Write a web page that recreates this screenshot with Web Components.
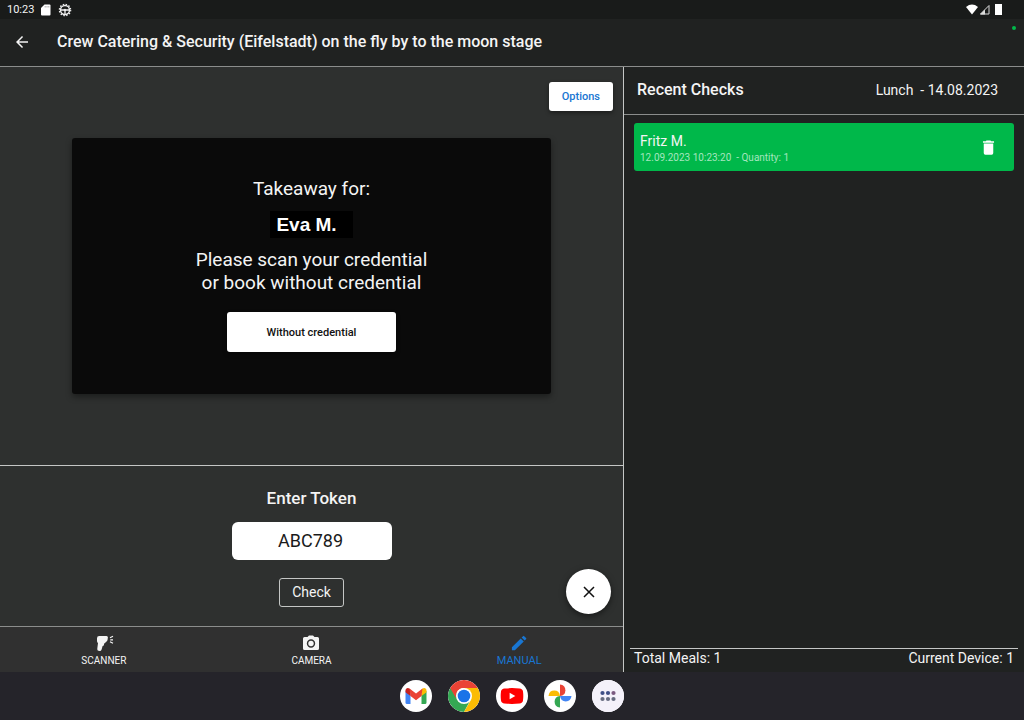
<!DOCTYPE html>
<html lang="en">
<head>
<meta charset="utf-8">
<meta name="viewport" content="width=device-width, initial-scale=1">
<title>Recent Checks</title>
<style>
  body {
    margin: 0;
    font-family: Roboto, "Liberation Sans", sans-serif;
    color: #f4f4f4;
    background: #202221;
    --line: #8b8d8c;
    --line-strong: #c4c6c5;
    --accent: #1976d2;
    --success: #00b84a;
  }
</style>
</head>
<body>
<catering-app>
  <status-bar slot="status" time="10:23"></status-bar>
  <top-bar slot="header">Crew Catering &amp; Security (Eifelstadt) on the fly by to the moon stage</top-bar>

  <takeaway-stage slot="main">
    <span slot="name">Eva M.</span>
  </takeaway-stage>
  <token-entry slot="main" value="ABC789"></token-entry>
  <mode-nav slot="main">
    <mode-tab icon="scanner">SCANNER</mode-tab>
    <mode-tab icon="camera">CAMERA</mode-tab>
    <mode-tab icon="pencil" active>MANUAL</mode-tab>
  </mode-nav>

  <checks-panel slot="side">
    <span slot="meal">Lunch&nbsp; - 14.08.2023</span>
    <check-item time="12.09.2023 10:23:20" quantity="1">Fritz M.</check-item>
    <span slot="total">Total Meals: 1</span>
    <span slot="device">Current Device: 1</span>
  </checks-panel>

  <app-dock slot="dock"></app-dock>
</catering-app>

<script>
  // attaches an open shadow root and fills it from a template
  class BaseElement extends HTMLElement {
    constructor() {
      super();
      this.attachShadow({ mode: "open" });
    }

    connectedCallback() {
      const template = document.createElement("template");
      template.innerHTML = this.render();
      this.shadowRoot.replaceChildren(template.content);
      this.bind();
    }

    bind() {}
  }

  class CateringApp extends BaseElement {
    render() {
      return `
        <style>
          :host {
            display: flex;
            flex-direction: column;
            min-height: 100vh;
          }
          .content {
            flex: 1;
            display: grid;
            grid-template-columns: 39fr 25fr;
          }
          main {
            display: flex;
            flex-direction: column;
            min-width: 0;
            box-sizing: border-box;
            background: #2e302f;
            border-right: 1px solid var(--line-strong);
          }
          aside {
            display: flex;
            min-width: 0;
          }
        </style>
        <slot name="status"></slot>
        <slot name="header"></slot>
        <div class="content">
          <main><slot name="main"></slot></main>
          <aside><slot name="side"></slot></aside>
        </div>
        <slot name="dock"></slot>
      `;
    }
  }
  customElements.define("catering-app", CateringApp);

  class StatusBar extends BaseElement {
    render() {
      return `
        <style>
          :host {
            display: flex;
            align-items: center;
            gap: 6px;
            height: 19px;
            padding: 0 22px 0 7px;
            background: #191b1a;
            font-size: 11px;
            line-height: 19px;
          }
          svg { display: block; }
          .right {
            display: flex;
            align-items: center;
            gap: 1px;
            margin-left: auto;
          }
          .battery { margin-left: 4px; }
        </style>
        <span>${this.getAttribute("time")}</span>
        <svg width="12" height="12" viewBox="0 0 12 12"><path fill="#fff" d="M4.500.5H9.500a1 1 0 0 1 1 1v9a1 1 0 0 1-1 1H2a1 1 0 0 1-1-1V4z"/><path stroke="#888" d="M5.200 2v1.500M7 2v1.500M8.800 2v1.500" stroke-width=".7"/></svg>
        <svg width="14" height="14" viewBox="0 0 14 14" fill="none" stroke="#eee">
          <circle cx="7" cy="7" r="4.500" stroke-width="1.400"/>
          <circle cx="7" cy="7" r="5.700" stroke-width="1.200" stroke-dasharray="1.500 1.480"/>
          <path d="M2.500 7h9M7 7v4.500" stroke-width="1.300"/><circle cx="7" cy="7" r=".8" fill="#eee"/>
        </svg>
        <div class="right">
          <svg width="12" height="11" viewBox="0 0 12 11"><path fill="#fff" d="M0 3Q6-1.800 12 3L6 10.500z"/></svg>
          <svg width="11" height="11" viewBox="0 0 11 11"><path fill="none" stroke="#ddd" d="M1.500 10H10V1.500z"/><path fill="#ddd" d="M1 10.500 6 5.500v5z"/></svg>
          <svg class="battery" width="7" height="11" viewBox="0 0 7 11"><path fill="#fff" d="M0 0h7v11H0z"/></svg>
        </div>
      `;
    }
  }
  customElements.define("status-bar", StatusBar);

  class TopBar extends BaseElement {
    render() {
      return `
        <style>
          :host {
            display: flex;
            align-items: center;
            gap: 20px;
            height: 45px;
            padding: 0 8px 2px 7px;
            background: #202221;
            border-bottom: 1px solid var(--line);
          }
          button {
            display: grid;
            place-items: center;
            width: 30px;
            height: 30px;
            padding: 0;
            border: 0;
            background: none;
            cursor: pointer;
          }
          h1 {
            flex: 1;
            margin: 0;
            font-size: 16px;
            font-weight: 500;
            line-height: 20px;
          }
          .dot {
            align-self: flex-start;
            width: 4px;
            height: 4px;
            margin-top: 7px;
            border-radius: 50%;
            background: var(--success);
          }
        </style>
        <button type="button" aria-label="Back">
          <svg width="18" height="18" viewBox="0 0 24 24"><path fill="#f4f4f4" d="M20 11H7.830l5.590-5.590L12 4l-8 8 8 8 1.410-1.410L7.830 13H20z"/></svg>
        </button>
        <h1><slot></slot></h1>
        <span class="dot"></span>
      `;
    }
  }
  customElements.define("top-bar", TopBar);

  class TakeawayStage extends BaseElement {
    render() {
      return `
        <style>
          :host {
            position: relative;
            flex: 1;
            display: flex;
            align-items: center;
            justify-content: center;
          }
          button {
            border: 0;
            border-radius: 3px;
            background: #fff;
            font-family: inherit;
            font-size: 11px;
            font-weight: 500;
            line-height: 13px;
            cursor: pointer;
            box-shadow: 0 2px 4px rgba(0, 0, 0, 0.4);
          }
          .options {
            position: absolute;
            top: 15px;
            right: 10px;
            padding: 8px 13px;
            color: var(--accent);
          }
          .card {
            display: flex;
            flex-direction: column;
            align-items: center;
            box-sizing: border-box;
            width: 77%;
            padding: 39px 16px 42px;
            border-radius: 3px;
            background: #0a0a0a;
            text-align: center;
            font-size: 19px;
            line-height: 23px;
            box-shadow: 0 3px 6px rgba(0, 0, 0, 0.4);
          }
          p { margin: 0; }
          .name {
            margin: 11px 0 10px;
            padding: 2px 16px 2px 6px;
            background: #000;
            color: #fff;
            font-family: "Liberation Sans", Arial, sans-serif;
            font-weight: 700;
          }
          .card button {
            margin-top: 18px;
            padding: 14px 40px 13px;
            color: #111;
          }
        </style>
        <section class="card">
          <p>Takeaway for:</p>
          <p class="name"><slot name="name"></slot></p>
          <p>Please scan your credential<br>or book without credential</p>
          <button type="button">Without credential</button>
        </section>
        <button type="button" class="options">Options</button>
      `;
    }
  }
  customElements.define("takeaway-stage", TakeawayStage);

  class TokenEntry extends BaseElement {
    render() {
      return `
        <style>
          :host {
            position: relative;
            display: block;
            border-top: 1px solid var(--line-strong);
          }
          form {
            display: flex;
            flex-direction: column;
            align-items: center;
            padding: 22px 16px 19px;
          }
          label {
            font-size: 17px;
            font-weight: 500;
            line-height: 20px;
          }
          input {
            box-sizing: border-box;
            width: 160px;
            height: 38px;
            margin: 14px 0 18px;
            padding: 0 6px 2px 4px;
            border: 0;
            border-radius: 6px;
            background: #fff;
            color: #1a1a1a;
            font-family: inherit;
            font-size: 18px;
            text-align: center;
          }
          .check {
            padding: 5px 12px;
            border: 1px solid var(--line-strong);
            border-radius: 3px;
            background: none;
            color: #f4f4f4;
            font-family: inherit;
            font-size: 14px;
            line-height: 17px;
            cursor: pointer;
          }
          .clear {
            position: absolute;
            right: 12px;
            bottom: 12px;
            display: grid;
            place-items: center;
            width: 45px;
            height: 45px;
            padding: 0;
            border: 0;
            border-radius: 50%;
            background: #fff;
            cursor: pointer;
            box-shadow: 0 2px 6px rgba(0, 0, 0, 0.5);
          }
        </style>
        <form>
          <label for="token">Enter Token</label>
          <input id="token" type="text" autocomplete="off" spellcheck="false" value="${this.getAttribute("value")}">
          <button class="check" type="submit">Check</button>
        </form>
        <button class="clear" type="button" aria-label="Clear">
          <svg width="12" height="12" viewBox="0 0 12 12"><path d="M1 1l10 10M11 1 1 11" stroke="#111" stroke-width="1.500"/></svg>
        </button>
      `;
    }

    bind() {
      const input = this.shadowRoot.querySelector("#token");
      this.shadowRoot.querySelector("form").addEventListener("submit", (e) => e.preventDefault());
      this.shadowRoot.querySelector(".clear").addEventListener("click", () => {
        input.value = "";
      });
    }
  }
  customElements.define("token-entry", TokenEntry);

  class ModeNav extends BaseElement {
    render() {
      return `
        <style>
          :host {
            display: block;
            background: #303030;
            border-top: 1px solid var(--line);
          }
          nav {
            display: grid;
            grid-template-columns: repeat(3, 1fr);
          }
        </style>
        <nav><slot></slot></nav>
      `;
    }

    bind() {
      this.addEventListener("click", (e) => {
        const tab = e.target.closest("mode-tab");
        if (!tab) return;
        this.querySelectorAll("mode-tab").forEach((t) => t.toggleAttribute("active", t === tab));
      });
    }
  }
  customElements.define("mode-nav", ModeNav);

  const tabIcons = {
    scanner: `<path d="M4 4.200Q4 2 6.200 2H13.500Q15 2 14.900 3.500L14.500 6Q14.200 7.500 12.800 8L12 9.200H11.200L10.800 11.500 9.600 12 8.600 15.500Q8.200 17 6.700 17 4 17 4.300 14.500L5 9Q4 8.500 4 7z"/><path d="M17 3.800l3-1.500M17.300 5.800H20M17 7.800l3 1.500" fill="none" stroke="currentColor" stroke-width="1.200"/>`,
    camera: `<path fill-rule="evenodd" d="M4.500 3h3L9 1.500h4L14.500 3h3A1.500 1.500 0 0 1 19 4.500v10a1.500 1.500 0 0 1-1.500 1.500h-13A1.500 1.500 0 0 1 3 14.500v-10A1.500 1.500 0 0 1 4.500 3zM11 5.300a4.200 4.200 0 1 0 0 8.400 4.200 4.200 0 0 0 0-8.400z"/><circle cx="11" cy="9.500" r="2.700"/>`,
    pencil: `<path transform="translate(1.500 -.5) scale(.8)" d="M3 17.250V21h3.750L17.810 9.940l-3.750-3.750zM20.710 7.040a1 1 0 0 0 0-1.410l-2.340-2.340a1 1 0 0 0-1.410 0l-1.830 1.830 3.750 3.750z"/>`
  };

  class ModeTab extends BaseElement {
    render() {
      return `
        <style>
          :host { display: block; color: #f4f4f4; }
          :host([active]) { color: var(--accent); }
          button {
            display: flex;
            flex-direction: column;
            align-items: center;
            gap: 3px;
            width: 100%;
            padding: 7px 0 5px;
            border: 0;
            background: none;
            color: inherit;
            font-family: inherit;
            font-size: 10px;
            line-height: 12px;
            cursor: pointer;
          }
          :host([active]) button { font-size: 11px; }
          svg { display: block; fill: currentColor; }
        </style>
        <button type="button">
          <svg width="22" height="18" viewBox="0 0 22 18">${tabIcons[this.getAttribute("icon")]}</svg>
          <slot></slot>
        </button>
      `;
    }
  }
  customElements.define("mode-tab", ModeTab);

  class ChecksPanel extends BaseElement {
    render() {
      return `
        <style>
          :host {
            flex: 1;
            display: flex;
            flex-direction: column;
            background: #202221;
          }
          header {
            display: flex;
            align-items: center;
            justify-content: space-between;
            height: 46px;
            padding: 0 26px 1px 13px;
            border-bottom: 1px solid var(--line);
            font-size: 14px;
            line-height: 18px;
          }
          h2 {
            margin: 0;
            font-size: 16px;
            font-weight: 500;
          }
          .list {
            flex: 1;
            padding: 8px 10px;
          }
          footer {
            display: flex;
            justify-content: space-between;
            margin: 0 6px;
            padding: 0 4px 5px;
            border-top: 1px solid var(--line-strong);
            font-size: 14px;
            line-height: 18px;
          }
        </style>
        <header>
          <h2>Recent Checks</h2>
          <slot name="meal"></slot>
        </header>
        <div class="list"><slot></slot></div>
        <footer>
          <slot name="total"></slot>
          <slot name="device"></slot>
        </footer>
      `;
    }
  }
  customElements.define("checks-panel", ChecksPanel);

  class CheckItem extends BaseElement {
    render() {
      return `
        <style>
          :host {
            display: flex;
            align-items: center;
            justify-content: space-between;
            height: 48px;
            padding: 0 16px 0 6px;
            border-radius: 3px;
            background: var(--success);
          }
          .text { padding-top: 3px; }
          .name {
            font-size: 14px;
            line-height: 18px;
          }
          .info {
            color: #a5e6bf;
            font-size: 10px;
            line-height: 16px;
          }
          button {
            padding: 0;
            border: 0;
            background: none;
            cursor: pointer;
          }
          svg { display: block; }
        </style>
        <div class="text">
          <div class="name"><slot></slot></div>
          <div class="info">${this.getAttribute("time")}&nbsp; - Quantity: ${this.getAttribute("quantity")}</div>
        </div>
        <button type="button" aria-label="Delete">
          <svg width="19" height="19" viewBox="0 0 24 24"><path fill="#fff" d="M6 19a2 2 0 0 0 2 2h8a2 2 0 0 0 2-2V7H6zM19 4h-3.500l-1-1h-5l-1 1H5v2h14z"/></svg>
        </button>
      `;
    }

    bind() {
      this.shadowRoot.querySelector("button").addEventListener("click", () => this.remove());
    }
  }
  customElements.define("check-item", CheckItem);

  class AppDock extends BaseElement {
    render() {
      return `
        <style>
          :host {
            display: flex;
            align-items: center;
            justify-content: center;
            gap: 16px;
            height: 48px;
            background: #25242a;
          }
          button {
            width: 32px;
            height: 32px;
            padding: 0;
            border: 0;
            border-radius: 50%;
            background: #fff;
            overflow: hidden;
            cursor: pointer;
          }
          svg { display: block; }
        </style>
        <button type="button" aria-label="Gmail">
          <svg width="32" height="32" viewBox="0 0 32 32">
            <path fill="#4285f4" d="M5.500 11v11.500A1.500 1.500 0 0 0 7 24h3.500V14z"/>
            <path fill="#34a853" d="M21.500 14v10H25a1.500 1.500 0 0 0 1.500-1.500V11z"/>
            <path fill="#fbbc04" d="M21.500 10.300V16l5-3.800V10.500c0-2.300-2.300-3.200-4-1.900z"/>
            <path fill="#c5221f" d="M5.500 10.500v1.700l5 3.800v-5.700l-1-1.700c-1.700-1.300-4-.4-4 1.900z"/>
            <path fill="#ea4335" d="M9.500 8.600 16 13.500l6.500-4.900-1 7.400-5.500 4.200-5.500-4.200z"/>
          </svg>
        </button>
        <button type="button" aria-label="Chrome">
          <svg width="32" height="32" viewBox="0 0 32 32">
            <path fill="#34a853" d="M16 16 2.140 8A16 16 0 0 0 16 32l6.500-12z"/>
            <path fill="#fbbc04" d="M16 8h13.860A16 16 0 0 1 16 32l6.900-12z"/>
            <path fill="#ea4335" d="M16 8h13.860A16 16 0 0 0 2.140 8l6.930 12A8 8 0 0 1 16 8z"/>
            <circle cx="16" cy="16" r="8" fill="#fff"/>
            <circle cx="16" cy="16" r="6.300" fill="#1a73e8"/>
          </svg>
        </button>
        <button type="button" aria-label="YouTube">
          <svg width="32" height="32" viewBox="0 0 32 32">
            <path fill="#f00" d="M8.500 8.500Q16 7.700 23.500 8.500 26.600 8.800 27 11.500 27.600 16 27 20.500 26.600 23.200 23.500 23.500 16 24.300 8.500 23.500 5.400 23.200 5 20.500 4.400 16 5 11.500 5.400 8.800 8.500 8.500z"/>
            <path fill="#fff" d="M13.600 12.800v6.400L19.300 16z"/>
          </svg>
        </button>
        <button type="button" aria-label="Photos">
          <svg width="32" height="32" viewBox="0 0 32 32">
            <path fill="#ea4335" d="M16 4.500a6.200 5.800 0 0 1 0 11.500z"/>
            <path fill="#4285f4" d="M27.500 16a5.800 6.200 0 0 1-11.500 0z"/>
            <path fill="#34a853" d="M16 27.500A6.200 5.800 0 0 1 16 16z"/>
            <path fill="#fbbc04" d="M4.500 16A5.800 6.200 0 0 1 16 16z"/>
          </svg>
        </button>
        <button type="button" aria-label="All apps">
          <svg width="32" height="32" viewBox="0 0 32 32">
            <path fill="#f4f1fa" d="M0 0h32v32H0z"/>
            <g fill="#3f4f86"><circle cx="10.500" cy="13" r="2.100"/><circle cx="16" cy="13" r="2.100"/></g>
            <circle cx="21.500" cy="13" r="2.100" fill="#7b5a80"/>
            <g fill="#666c80"><circle cx="10.500" cy="19" r="2.100"/><circle cx="16" cy="19" r="2.100"/><circle cx="21.500" cy="19" r="2.100"/></g>
          </svg>
        </button>
      `;
    }
  }
  customElements.define("app-dock", AppDock);
</script>
</body>
</html>
